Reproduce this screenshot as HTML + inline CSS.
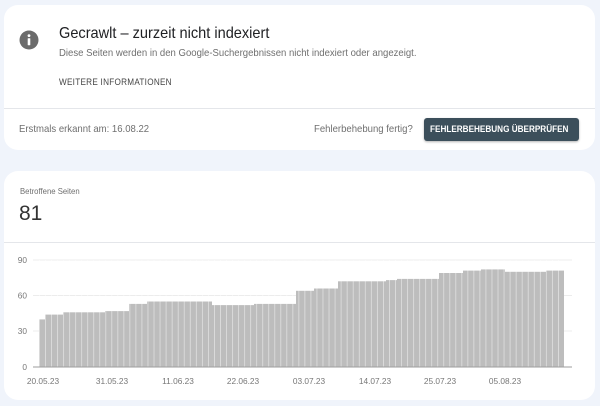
<!DOCTYPE html>
<html><head><meta charset="utf-8"><style>
body{margin:0;width:600px;height:406px;background:#f0f4fb;font-family:"Liberation Sans",sans-serif;position:relative;overflow:hidden}
.card{position:absolute;left:4px;width:591px;background:#fff;border-radius:14px}
.t{position:absolute;white-space:nowrap}
.s{transform-origin:0 0;transform:scaleX(.91)}
</style></head><body>
<div class="card" style="top:5px;height:145px">
 <div style="position:absolute;left:0;right:0;top:103px;height:1px;background:#e4e6ea"></div>
</div>
<svg class="t" style="left:19px;top:30px" width="20" height="20" viewBox="0 0 20 20"><circle cx="10" cy="10" r="9.5" fill="#6b6b6b"/><circle cx="10" cy="5.6" r="1.4" fill="#fff"/><rect x="8.7" y="8.3" width="2.6" height="7" rx=".5" fill="#fff"/></svg>
<div class="t s" style="left:59px;top:25px;font-size:16px;color:#202124">Gecrawlt – zurzeit nicht indexiert</div>
<div class="t s" style="left:59px;top:47px;font-size:10.5px;color:#6f6f6f">Diese Seiten werden in den Google-Suchergebnissen nicht indexiert oder angezeigt.</div>
<div class="t" style="left:59px;top:77px;font-size:9.5px;color:#444;letter-spacing:.3px;transform-origin:0 0;transform:scaleX(.86)">WEITERE INFORMATIONEN</div>
<div class="t s" style="left:19px;top:123px;font-size:10.5px;color:#6f6f6f">Erstmals erkannt am: 16.08.22</div>
<div class="t s" style="left:314px;top:123px;font-size:10.5px;color:#6f6f6f">Fehlerbehebung fertig?</div>
<div class="t" style="left:424px;top:118px;width:155px;height:23px;background:#3c4f5b;border-radius:3px;box-shadow:0 1px 2px rgba(0,0,0,.3);"></div>
<div class="t" style="left:430px;top:118px;line-height:23px;color:#fff;font-size:9.5px;font-weight:bold;transform-origin:0 0;transform:scaleX(.86)">FEHLERBEHEBUNG ÜBERPRÜFEN</div>

<div class="card" style="top:171px;height:229px">
 <div style="position:absolute;left:0;right:0;top:71px;height:1px;background:#e4e6ea"></div>
</div>
<div class="t s" style="left:20px;top:186px;font-size:8.5px;color:#6f6f6f">Betroffene Seiten</div>
<div class="t" style="left:19px;top:202px;font-size:21px;color:#333">81</div>

<svg class="t" style="left:0;top:250px" width="600" height="140" viewBox="0 250 600 140">
<defs><pattern id="p" x="39" y="0" width="6.035" height="10" patternUnits="userSpaceOnUse"><rect x="0" y="0" width="0.7" height="10" fill="#fff" opacity=".6"/></pattern></defs>
<g stroke="#ececec" stroke-width="1">
<line x1="33" y1="260" x2="572" y2="260"/><line x1="33" y1="295.5" x2="572" y2="295.5"/><line x1="33" y1="331" x2="572" y2="331"/>
</g>
<g fill="#bdbdbd">
<rect x="39" y="319.4" width="6" height="47.6"/>
<rect x="45" y="314.6" width="18" height="52.4"/>
<rect x="63" y="312.3" width="42" height="54.7"/>
<rect x="105" y="311.1" width="24" height="55.9"/>
<rect x="129" y="303.9" width="18" height="63.1"/>
<rect x="147" y="301.5" width="65" height="65.5"/>
<rect x="212" y="305.1" width="42" height="61.9"/>
<rect x="254" y="303.9" width="42" height="63.1"/>
<rect x="296" y="290.8" width="18" height="76.2"/>
<rect x="314" y="288.5" width="24" height="78.5"/>
<rect x="338" y="281.3" width="48" height="85.7"/>
<rect x="386" y="280.1" width="11" height="86.9"/>
<rect x="397" y="278.9" width="42" height="88.1"/>
<rect x="439" y="273" width="24" height="94"/>
<rect x="463" y="270.6" width="18" height="96.4"/>
<rect x="481" y="269.4" width="24" height="97.6"/>
<rect x="505" y="271.8" width="41" height="95.2"/>
<rect x="546" y="270.6" width="18" height="96.4"/>
</g>
<rect x="39" y="260" width="525" height="107" fill="url(#p)"/>
<line x1="33" y1="367" x2="572" y2="367" stroke="#9e9e9e" stroke-width="1"/>
<g font-size="8.3" fill="#777" font-family="Liberation Sans, sans-serif">
<text x="27" y="263" text-anchor="end">90</text><text x="27" y="298.5" text-anchor="end">60</text><text x="27" y="334" text-anchor="end">30</text><text x="27" y="370" text-anchor="end">0</text>
<g text-anchor="middle">
<text x="43" y="384">20.05.23</text><text x="112" y="384">31.05.23</text><text x="178" y="384">11.06.23</text><text x="243" y="384">22.06.23</text><text x="309" y="384">03.07.23</text><text x="375" y="384">14.07.23</text><text x="440" y="384">25.07.23</text><text x="505" y="384">05.08.23</text>
</g></g>
</svg>
</body></html>
